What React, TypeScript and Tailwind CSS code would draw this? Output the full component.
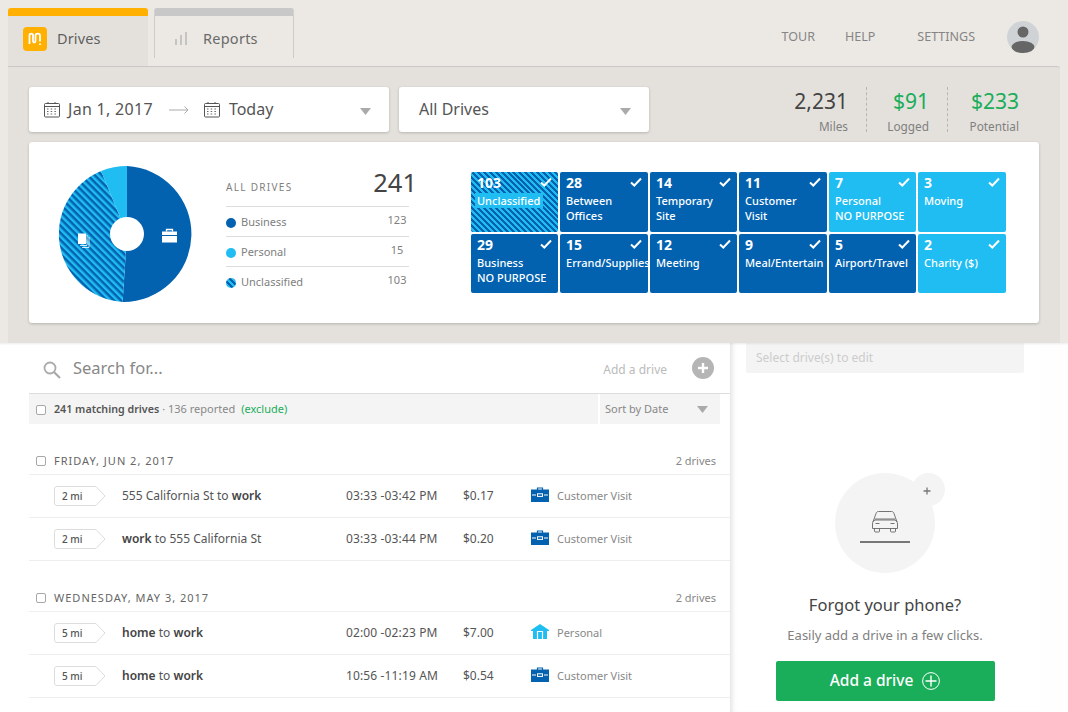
import React from "react";

const font = "font-['Noto_Sans',sans-serif]";

function Caret({ className = "" }: { className?: string }) {
  return (
    <svg width="11" height="7" viewBox="0 0 11 7" className={className}>
      <path d="M0 0H11L5.500 7Z" fill="#aaaaaa" />
    </svg>
  );
}

function Calendar() {
  return (
    <svg width="17" height="17" viewBox="0 0 17 17" fill="none" stroke="#555" className="shrink-0">
      <rect x="1.500" y="2.500" width="15" height="13.500" rx="1" />
      <path d="M1.500 5.500H16.500M5 1V3M12 1V3" />
      <path d="M4 8h1.500M7.700 8h1.500M11.400 8h1.500M4 10.500h1.500M7.700 10.500h1.500M11.400 10.500h1.500M4 13h1.500M7.700 13h1.500M11.400 13h1.500" strokeWidth="0.9" />
    </svg>
  );
}

function Checkbox() {
  return <span className="w-[10px] h-[10px] rounded-[2px] border border-[#a8a8a8] bg-white shrink-0" />;
}

function Briefcase() {
  return (
    <svg width="18" height="15" viewBox="0 0 18 15" className="shrink-0 -mt-[3px]">
      <path d="M6.500 3V1H11.500V3" fill="none" stroke="#0262b0" strokeWidth="1.2" />
      <rect y="2.500" width="18" height="12.500" fill="#0262b0" />
      <path d="M1 8H5M13 8H17" stroke="#fff" strokeWidth="1" />
      <rect x="6.500" y="6.800" width="5" height="2.600" fill="none" stroke="#fff" strokeWidth="1" />
    </svg>
  );
}

function House() {
  return (
    <svg width="18" height="15" viewBox="0 0 18 15" className="shrink-0 -mt-[3px]">
      <path d="M9 0L18 6V7H16V15H2V7H0V6Z" fill="#20bdf2" />
      <path d="M6.500 15V7.500H11.500V15" fill="none" stroke="#fff" strokeWidth="1.2" />
    </svg>
  );
}

function Tile({ n, l1, l2, light, striped }: { n: string; l1: string; l2?: string; light?: boolean; striped?: boolean }) {
  return (
    <div
      className={`relative overflow-hidden rounded-[2px] text-white pl-[6px] pt-[2px] ${
        striped
          ? "bg-[repeating-linear-gradient(45deg,#0262b0_0px,#0262b0_2.1px,#20bdf2_2.1px,#20bdf2_4.2px)]"
          : light
          ? "bg-[#20bdf2]"
          : "bg-[#0262b0]"
      }`}
    >
      <div className="text-[14px] leading-[17px] font-bold">{n}</div>
      <div className={`text-[11px] leading-[15px] mt-[2px] font-medium whitespace-nowrap ${striped ? "bg-[#20bdf2] -ml-[2px] pl-[2px] w-[68px]" : ""}`}>{l1}</div>
      {l2 && <div className="text-[11px] leading-[15px] font-medium whitespace-nowrap">{l2}</div>}
      <svg width="12" height="10" viewBox="0 0 12 10" className="absolute top-[5px] right-[6px]">
        <path d="M1 5.500L4.300 8.500L11 1.500" fill="none" stroke="#fff" strokeWidth="2" />
      </svg>
    </div>
  );
}

function LegendRow({ label, value, dot }: { label: string; value: string; dot: string }) {
  return (
    <div className="h-[30px] pt-[2px] border-b border-[#dddddd] last:border-transparent flex items-center">
      <span className={`w-[10px] h-[10px] rounded-full mr-[5px] ${dot}`} />
      <span className="text-[11px] text-[#808080]">{label}</span>
      <span className="ml-auto text-[11px] text-[#808080] w-[24px] text-center -mt-[4px]">{value}</span>
    </div>
  );
}

function DayHeader({ date }: { date: string }) {
  return (
    <div className="h-[51px] border-b border-[#eeeeee] flex items-end pb-[8px] pl-[7px] pr-[14px]">
      <Checkbox />
      <span className="ml-[8px] text-[11px] tracking-[1px] text-[#666] leading-[11px]">{date}</span>
      <span className="ml-auto text-[11px] text-[#888] leading-[11px]">2 drives</span>
    </div>
  );
}

function Row({ mi, addr, time, cost, label, personal }: { mi: string; addr: React.ReactNode; time: string; cost: string; label: string; personal?: boolean }) {
  return (
    <div className="h-[43px] border-b border-[#eeeeee] flex items-center pl-[25px]">
      <div className="relative w-[52px] h-[20px] shrink-0 flex items-center pl-[8px]">
        <svg width="52" height="20" viewBox="0 0 52 20" className="absolute inset-0">
          <path d="M3 .5H42L51 10L42 19.500H3A2.500 2.500 0 0 1 .5 17V3A2.500 2.500 0 0 1 3 .5Z" fill="#fff" stroke="#dddddd" />
        </svg>
        <span className="relative text-[10px] font-medium text-[#555]">{mi}</span>
      </div>
      <div className="ml-[16px] w-[224px] shrink-0 text-[12px] text-[#555] whitespace-nowrap">{addr}</div>
      <div className="w-[117px] shrink-0 text-[12px] tracking-[0.13px] text-[#555] whitespace-nowrap">{time}</div>
      <div className="w-[68px] shrink-0 text-[12px] text-[#555]">{cost}</div>
      {personal ? <House /> : <Briefcase />}
      <span className="ml-[8px] text-[11px] text-[#888] mt-[1px]">{label}</span>
    </div>
  );
}

export default function App() {
  const b = (s: string) => <b className="font-semibold text-[#444]">{s}</b>;
  return (
    <div className={`${font} w-[1068px] h-[712px] overflow-hidden bg-white flex flex-col`}>
      <header className="relative z-10 h-[343px] shrink-0 bg-[#ece9e4] px-[8px] flex flex-col shadow-[0_1px_2px_rgba(0,0,0,0.08)]">
        <div className="h-[66px] pt-[8px] flex items-start shrink-0">
          <div className="w-[140px] h-[58px] bg-[#e4e1dc] border-t-[8px] border-[#ffb000] rounded-t-[3px] flex items-center pl-[15px] relative z-10">
            <svg width="24" height="24" viewBox="0 0 24 24" className="-mt-[4px]">
              <rect width="24" height="24" rx="4" fill="#ffb000" />
              <path d="M6.500 17V8.500C6.500 6 10 6 10 8.500V14C10 16 12.500 16 12.500 14V8.500C12.500 6 17 6 17 8.500V14.500" fill="none" stroke="#fff" strokeWidth="1.8" />
              <path d="M17 16.500V18" stroke="#fff" strokeWidth="1.8" />
            </svg>
            <span className="ml-[10px] text-[14.500px] tracking-[0.15px] text-[#5f5f5f] -mt-[5px]">Drives</span>
          </div>
          <div className="ml-[6px] w-[140px] h-[50px] border-t-[8px] border-x border-t-[#c8c8c8] border-x-[#cccccc] rounded-t-[3px] flex items-center pl-[19px] pt-[2px]">
            <svg width="14" height="14" viewBox="0 0 14 14" stroke="#c4c4c4" strokeWidth="2">
              <path d="M2 14V8M7 14V4M12 14V1" />
            </svg>
            <span className="ml-[15px] mt-[2px] text-[14.500px] tracking-[0.25px] text-[#6a6a6a]">Reports</span>
          </div>
          <nav className="ml-auto mr-[21px] flex items-center h-[42px] mt-[8px] text-[12.500px] text-[#858585]">
            <span>TOUR</span>
            <span className="ml-[30px]">HELP</span>
            <span className="ml-[42px]">SETTINGS</span>
            <svg width="32" height="32" viewBox="0 0 32 32" className="ml-[32px]">
              <circle cx="16" cy="16" r="16" fill="#d0d3d6" />
              <circle cx="16" cy="11" r="5.500" fill="#666" />
              <ellipse cx="16" cy="26" rx="11.500" ry="6" fill="#666" />
            </svg>
          </nav>
        </div>
        <section className="h-[277px] bg-[#e4e1dc] border-t border-[#c8c8c8] rounded-tr-[3px] px-[21px] pt-[20px]">
          <div className="flex h-[45px] items-stretch">
            <div className="w-[360px] bg-white rounded-[3px] shadow-[0_1px_3px_rgba(0,0,0,0.2)] flex items-center pl-[14px] pr-[18px] text-[16px] text-[#555]">
              <Calendar />
              <span className="ml-[8px] -mt-[1px] tracking-[0.3px]">Jan 1, 2017</span>
              <svg width="20" height="8" viewBox="0 0 20 8" className="ml-[16px]" fill="none" stroke="#aaa">
                <path d="M0 4H19M15.500 .5L19 4L15.500 7.500" />
              </svg>
              <span className="ml-[14px] flex"><Calendar /></span>
              <span className="ml-[9px] -mt-[1px]">Today</span>
              <Caret className="ml-auto mt-[3px]" />
            </div>
            <div className="ml-[10px] w-[250px] bg-white rounded-[3px] shadow-[0_1px_3px_rgba(0,0,0,0.2)] flex items-center pl-[20px] pr-[18px] text-[16px] text-[#555]">
              <span className="-mt-[1px]">All Drives</span>
              <Caret className="ml-auto mt-[3px]" />
            </div>
            <div className="ml-auto flex">
              <Stat value="2,231" label="Miles" color="text-[#444]" />
              <Stat value="$91" label="Logged" color="text-[#1aad5a]" divider width="w-[81px]" />
              <Stat value="$233" label="Potential" color="text-[#1aad5a]" divider width="w-[92px]" last />
            </div>
          </div>
          <div className="mt-[10px] h-[181px] bg-white rounded-[3px] shadow-[0_1px_3px_rgba(0,0,0,0.2)] flex items-start pl-[30px]">
            <svg width="136" height="136" viewBox="0 0 136 136" className="mt-[24px] shrink-0">
              <defs>
                <pattern id="st" width="5" height="5" patternUnits="userSpaceOnUse" patternTransform="rotate(45)">
                  <rect width="5" height="5" fill="#20bdf2" />
                  <rect width="5" height="2.500" fill="#0262b0" />
                </pattern>
              </defs>
              <path d="M68 68L68 0A68 68 0 0 1 63.600 135.900Z" fill="#0262b0" />
              <path d="M68 68L63.600 135.900A68 68 0 0 1 42.100 5.100Z" fill="url(#st)" />
              <path d="M68 68L42.100 5.100A68 68 0 0 1 68 0Z" fill="#20bdf2" />
              <circle cx="68" cy="68" r="17" fill="#fff" />
              <path d="M103 65.500H118V69H103ZM103 70H118V76.500H103Z" fill="#fff" />
              <path d="M107.500 65.500V63.500H113.500V65.500" fill="none" stroke="#fff" strokeWidth="1.3" />
              <path d="M19 67.500H27V78H19Z" fill="#fff" />
              <path d="M28 69V79.500H21M30 71V81.500H23" fill="none" stroke="#fff" strokeWidth="0.8" />
            </svg>
            <div className="ml-[31px] w-[183px] mt-[34px] shrink-0">
              <div className="h-[31px] border-b border-[#dddddd] flex items-center relative">
                <span className="text-[10px] tracking-[1.3px] text-[#808080] -mt-[7px]">ALL DRIVES</span>
                <span className="absolute right-[-8px] top-[-8px] text-[25.500px] leading-[28px] text-[#444]">241</span>
              </div>
              <LegendRow label="Business" value="123" dot="bg-[#0262b0]" />
              <LegendRow label="Personal" value="15" dot="bg-[#20bdf2]" />
              <LegendRow label="Unclassified" value="103" dot="bg-[repeating-linear-gradient(45deg,#0262b0_0px,#0262b0_2px,#20bdf2_2px,#20bdf2_4px)]" />
            </div>
            <div className="ml-[62px] mt-[30px] w-[535px] h-[121px] grid grid-cols-[87px_88px_87px_88px_87px_88px] grid-rows-[60px_59px] gap-[2px]">
              <Tile n="103" l1="Unclassified" striped />
              <Tile n="28" l1="Between" l2="Offices" />
              <Tile n="14" l1="Temporary" l2="Site" />
              <Tile n="11" l1="Customer" l2="Visit" />
              <Tile n="7" l1="Personal" l2="NO PURPOSE" light />
              <Tile n="3" l1="Moving" light />
              <Tile n="29" l1="Business" l2="NO PURPOSE" />
              <Tile n="15" l1="Errand/Supplies" />
              <Tile n="12" l1="Meeting" />
              <Tile n="9" l1="Meal/Entertain" />
              <Tile n="5" l1="Airport/Travel" />
              <Tile n="2" l1="Charity ($)" light />
            </div>
          </div>
        </section>
      </header>
      <main className="flex-1 flex min-h-0">
        <div className="w-[730px] shrink-0 pl-[29px]">
          <div className="h-[51px] border-b border-[#dddddd] flex items-center pl-[14px] pr-[16px]">
            <svg width="18" height="18" viewBox="0 0 18 18" fill="none" stroke="#aaaaaa" strokeWidth="1.8" className="mt-[3px]">
              <circle cx="7" cy="7" r="5.500" />
              <path d="M11 11L17 17" strokeWidth="2.2" />
            </svg>
            <span className="ml-[12px] text-[16.500px] text-[#888] mt-[1px]">Search for...</span>
            <span className="ml-auto text-[12px] text-[#bbbbbb] mt-[3px]">Add a drive</span>
            <span className="ml-[25px] w-[22px] h-[22px] rounded-full bg-[#b5b5b5] flex items-center justify-center">
              <svg width="12" height="12" viewBox="0 0 12 12"><path d="M6 1V11M1 6H11" stroke="#fff" strokeWidth="2.4" /></svg>
            </span>
          </div>
          <div className="h-[30px] mr-[10px] flex gap-[2px]">
            <div className="flex-1 bg-[#f4f4f4] flex items-center pl-[7px] pt-[1px]">
              <Checkbox />
              <span className="ml-[8px] text-[10.700px] font-semibold text-[#555]">241 matching drives</span>
              <span className="ml-[3px] text-[11px] text-[#888]">· 136 reported</span>
              <span className="ml-[6px] text-[11px] text-[#1aad5a]">(exclude)</span>
            </div>
            <div className="w-[120px] bg-[#f4f4f4] flex items-center pl-[5px] pr-[12px] pt-[1px]">
              <span className="text-[11px] text-[#888]">Sort by Date</span>
              <Caret className="ml-auto" />
            </div>
          </div>
          <DayHeader date="FRIDAY, JUN 2, 2017" />
          <Row mi="2 mi" addr={<>555 California St to {b("work")}</>} time="03:33 -03:42 PM" cost="$0.17" label="Customer Visit" />
          <Row mi="2 mi" addr={<>{b("work")} to 555 California St</>} time="03:33 -03:44 PM" cost="$0.20" label="Customer Visit" />
          <DayHeader date="WEDNESDAY, MAY 3, 2017" />
          <Row mi="5 mi" addr={<>{b("home")} to {b("work")}</>} time="02:00 -02:23 PM" cost="$7.00" label="Personal" personal />
          <Row mi="5 mi" addr={<>{b("home")} to {b("work")}</>} time="10:56 -11:19 AM" cost="$0.54" label="Customer Visit" />
        </div>
        <aside className="w-[310px] shrink-0 px-[16px] bg-white shadow-[inset_5px_0_5px_-3px_rgba(0,0,0,0.12)] flex flex-col items-center relative">
          <div className="w-full h-[30px] bg-[#f4f4f4] rounded-b-[2px] flex items-center pl-[10px] text-[12px] text-[#cccccc]">Select drive(s) to edit</div>
          <div className="relative mt-[100px] w-[100px] h-[100px] rounded-full bg-[#f4f4f4] flex flex-col items-center shrink-0">
            <span className="absolute -top-0 left-[77px] w-[33px] h-[33px] rounded-full bg-[#f4f4f4] flex items-center justify-center">
              <svg width="8" height="8" viewBox="0 0 8 8" className="-ml-[3px] mt-[2px]"><path d="M4 .5V7.500M.5 4H7.500" stroke="#777" strokeWidth="1.3" /></svg>
            </span>
            <svg width="28" height="23" viewBox="0 0 28 23" fill="none" stroke="#666" strokeWidth="0.9" className="mt-[37px]">
              <path d="M2 12L5 3.500C5.400 2 6.500 1.500 7.500 1.500H20.500C21.500 1.500 22.600 2 23 3.500L26 12" />
              <path d="M4 9H24M1.500 14C1.500 12 2.500 10.500 4 10H24C25.500 10.500 26.500 12 26.500 14V18.500H1.500Z" />
              <path d="M3.500 18.500V21C3.500 21.800 4 22 4.500 22H7.500C8.200 22 8.500 21.800 8.500 21V18.500M19.500 18.500V21C19.500 21.800 20 22 20.500 22H23.500C24.200 22 24.500 21.800 24.500 21V18.500" />
              <path d="M4.500 13.500H8.500M19.500 13.500H23.500" />
            </svg>
            <span className="mt-[8px] w-[50px] h-[2px] bg-[#777]" />
          </div>
          <h2 className="mt-[22px] text-[16.500px] leading-[19px] text-[#444]">Forgot your phone?</h2>
          <p className="mt-[14px] text-[13px] leading-[15px] text-[#808080]">Easily add a drive in a few clicks.</p>
          <button className="mt-[18px] w-[219px] h-[40px] pb-[1px] bg-[#1aad5a] rounded-[2px] flex items-center justify-center text-white text-[15.500px] font-medium">
            Add a drive
            <svg width="18" height="18" viewBox="0 0 18 18" fill="none" stroke="#fff" className="ml-[9px]">
              <circle cx="9" cy="9" r="8.400" />
              <path d="M9 3.500V14.500M3.500 9H14.500" strokeWidth="1.400" />
            </svg>
          </button>
        </aside>
        <div className="flex-1 bg-[#fefefe]" />
      </main>
    </div>
  );
}

function Stat({ value, label, color, divider, width, last }: { value: string; label: string; color: string; divider?: boolean; width?: string; last?: boolean }) {
  return (
    <div className={`flex flex-col items-end ${width ?? ""} ${last ? "pr-[20px]" : "pr-[18px]"} ${divider ? "border-l border-dashed border-[#b5b5b5]" : ""}`}>
      <span className={`text-[21px] leading-[24px] mt-[2px] ${color}`}>{value}</span>
      <span className="text-[11.800px] leading-[15px] mt-[6px] text-[#808080]">{label}</span>
    </div>
  );
}
